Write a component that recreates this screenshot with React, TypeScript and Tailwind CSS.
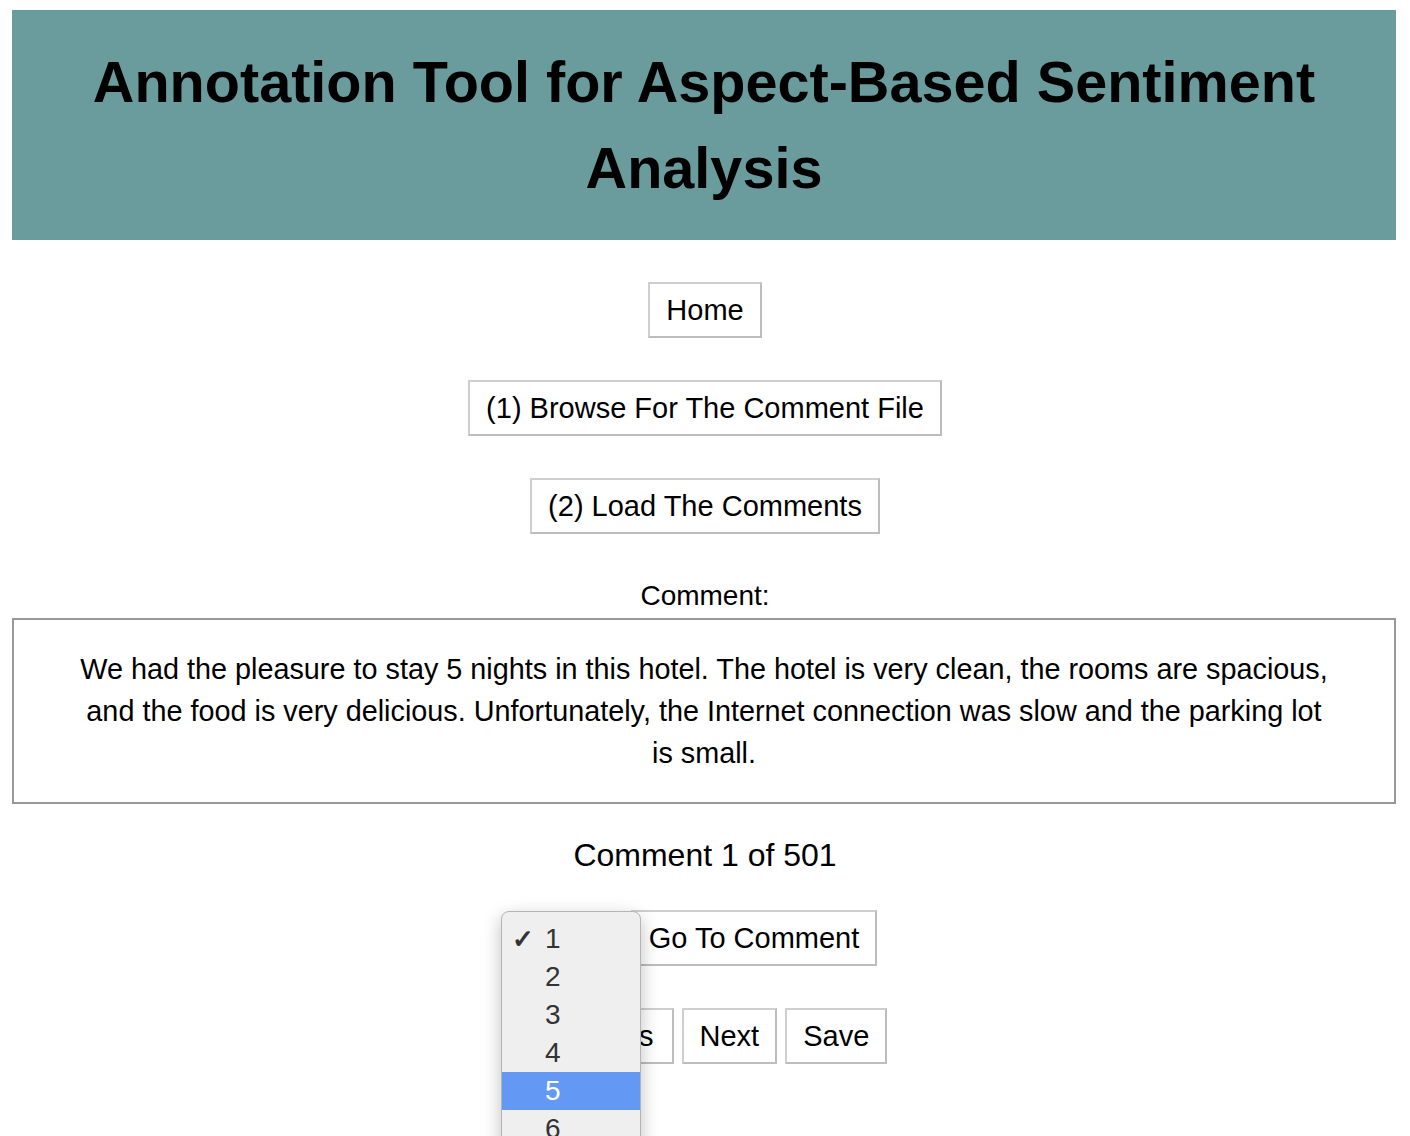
const font = { fontFamily: '"Liberation Sans", Arial, Helvetica, sans-serif' };

function Btn({ children, className = "" }: { children: React.ReactNode; className?: string }) {
  return (
    <button
      className={
        "h-[56px] px-[16px] border-2 border-[#cfcfcf] border-b-[#bdbdbd] border-r-[#bdbdbd] bg-white text-[29px] leading-[32px] text-black " +
        className
      }
    >
      {children}
    </button>
  );
}

export default function App() {
  const options = [1, 2, 3, 4, 5, 6];
  return (
    <div className="relative min-h-[1136px] bg-white overflow-hidden" style={font}>
      <header className="ml-[12px] mt-[10px] w-[1384px] h-[230px] bg-[#6a9c9e] flex items-center justify-center">
        <h1 className="text-[57.6px] leading-[86px] font-bold text-black text-center px-[60px]">
          Annotation Tool for Aspect-Based Sentiment Analysis
        </h1>
      </header>

      <div className="flex flex-col items-center">
        <Btn className="mt-[42px]">Home</Btn>
        <Btn className="mt-[42px]">(1) Browse For The Comment File</Btn>
        <Btn className="mt-[42px]">(2) Load The Comments</Btn>
        <p className="mt-[45px] text-[28px] leading-[34px]">Comment:</p>
      </div>

      <div className="ml-[12px] mt-[5px] w-[1384px] h-[186px] border-2 border-[#999999] flex items-center justify-center px-[64px]">
        <p className="text-[28.8px] leading-[42px] text-center text-black">
          We had the pleasure to stay 5 nights in this hotel. The hotel is very clean, the rooms are spacious, and the
          food is very delicious. Unfortunately, the Internet connection was slow and the parking lot is small.
        </p>
      </div>

      <div className="flex flex-col items-center">
        <p className="mt-[32px] text-[32px] leading-[38px]">Comment 1 of 501</p>
        <div className="mt-[36px] flex items-center gap-[6px]">
          <select className="h-[40px] w-[92px] text-[28px] border border-[#aaa] rounded">
            <option>1</option>
          </select>
          <Btn>Go To Comment</Btn>
        </div>
        <div className="mt-[42px] flex items-center gap-[8px]">
          <Btn className="h-[54px] pr-[18px]">Previous</Btn>
          <Btn className="h-[54px]">Next</Btn>
          <Btn className="h-[54px]">Save</Btn>
        </div>
      </div>

      {/* native select popup */}
      <div className="absolute left-[501px] top-[911px] w-[140px] h-[260px] bg-[#efefef] border border-[#b5b5b5] rounded-t-[8px] shadow-[0_6px_18px_rgba(0,0,0,0.25)] pt-[8px]">
        {options.map((n) => (
          <div
            key={n}
            className={
              "h-[38px] flex items-center text-[28px] " +
              (n === 5 ? "bg-[#6399f5] text-white" : "text-[#333333]")
            }
          >
            <span className="w-[43px] pl-[10px] text-[26px] font-bold leading-none">{n === 1 ? "✓" : ""}</span>
            <span>{n}</span>
          </div>
        ))}
      </div>
    </div>
  );
}
